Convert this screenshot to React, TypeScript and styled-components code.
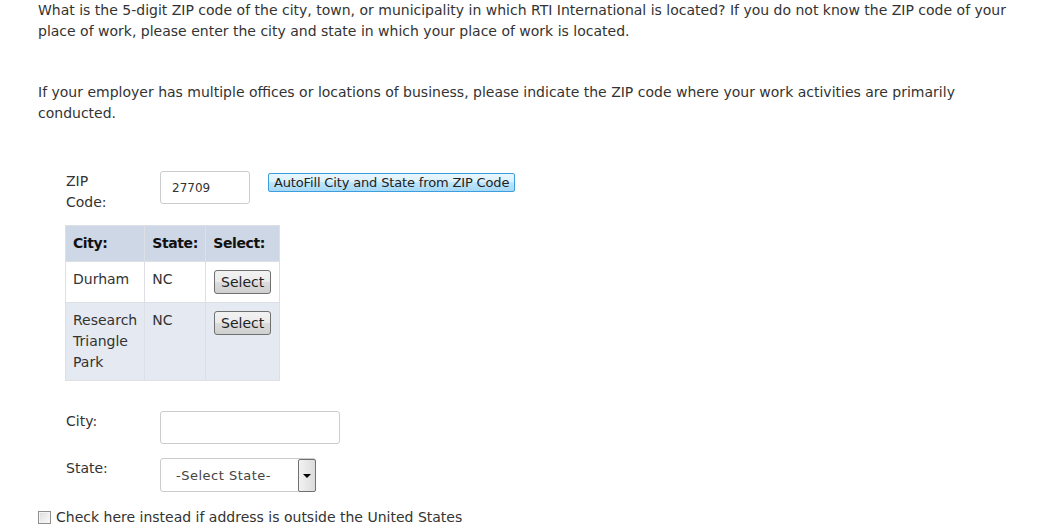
import styled, { createGlobalStyle } from "styled-components";

const GlobalStyle = createGlobalStyle`
  html, body {
    margin: 0;
    padding: 0;
    background: #fff;
  }
  body {
    font-family: "DejaVu Sans", Verdana, sans-serif;
    font-size: 14px;
    line-height: 21px;
    color: #333;
  }
`;

const Page = styled.div`
  padding: 0 12px 0 38px;
`;

const Question = styled.p`
  margin: 0 0 40px;
`;

const Note = styled.p`
  margin: 0 0 47px;
`;

const Fields = styled.div`
  padding-left: 28px;
`;

const FieldRow = styled.div<{ $gap?: number }>`
  display: flex;
  align-items: flex-start;
  margin-bottom: ${(p) => p.$gap ?? 14}px;
`;

const Label = styled.label`
  width: 60px;
  margin-right: 34px;
`;

const TextInput = styled.input<{ $width: number }>`
  box-sizing: border-box;
  width: ${(p) => p.$width}px;
  height: 33px;
  margin: 0;
  padding: 0 11px;
  border: 1px solid #ccc;
  border-radius: 3px;
  font-family: "DejaVu Sans", Verdana, sans-serif;
  font-size: 12px;
  color: #333;
  outline: none;
`;

const AutoFillButton = styled.button`
  height: 19px;
  margin: 2px 0 0 18px;
  padding: 0 5px;
  border: 1px solid #3c9ee0;
  border-radius: 2px;
  background: linear-gradient(#eaf6fd, #d9f0fc 50%, #bee6fd 50%, #a7d9f5);
  font-family: "DejaVu Sans", Verdana, sans-serif;
  font-size: 13px;
  letter-spacing: -0.15px;
  line-height: 15px;
  color: #222;
`;

const ResultTable = styled.table`
  border-collapse: collapse;
  margin: 12px 0 30px -1px;
  td,
  th {
    border: 1px solid #dcdfe4;
    padding: 7px;
    vertical-align: top;
    text-align: left;
  }
  th {
    background: #cdd7e6;
    font-weight: bold;
    letter-spacing: -0.4px;
    color: #111;
  }
`;

const ResultRow = styled.tr<{ $alt?: boolean }>`
  background: ${(p) => (p.$alt ? "#e5e9f1" : "#fff")};
`;

const SelectButton = styled.button`
  display: block;
  box-sizing: border-box;
  width: 57px;
  height: 24px;
  margin: 1px 0 1px 1px;
  padding: 0;
  border: 1px solid #707070;
  border-radius: 3px;
  background: linear-gradient(#f2f2f2, #ebebeb 50%, #dddddd 50%, #cfcfcf);
  font-family: "DejaVu Sans", Verdana, sans-serif;
  font-size: 14px;
  color: #222;
`;

const SelectWrap = styled.div`
  position: relative;
  width: 156px;
  height: 34px;
`;

const StateSelect = styled.select`
  box-sizing: border-box;
  width: 100%;
  height: 100%;
  margin: 0;
  padding: 0 0 0 15px;
  border: 1px solid #ccc;
  border-radius: 3px;
  background: #fff;
  appearance: none;
  font-family: "DejaVu Sans", Verdana, sans-serif;
  font-size: 13px;
  letter-spacing: 0.5px;
  color: #444;
  outline: none;
`;

const ArrowBox = styled.span`
  position: absolute;
  top: 1px;
  right: 0;
  box-sizing: border-box;
  width: 18px;
  height: 33px;
  border: 1px solid #707070;
  border-radius: 2px;
  background: linear-gradient(90deg, #f2f2f2, #dcdcdc);
  display: flex;
  align-items: center;
  justify-content: center;
  pointer-events: none;

  &::after {
    content: "";
    border-left: 4px solid transparent;
    border-right: 4px solid transparent;
    border-top: 4px solid #000;
  }
`;

const CheckLine = styled.label`
  display: flex;
  align-items: center;
  gap: 5px;
`;

const CheckBox = styled.input`
  appearance: none;
  box-sizing: border-box;
  width: 13px;
  height: 13px;
  margin: 0;
  border: 1px solid #8f8f8f;
  background: linear-gradient(135deg, #dcdcdc, #fbfbfb);
  box-shadow: inset 0 0 0 1px #f4f4f4;
`;

const rows = [
  { city: ["Durham"], state: "NC" },
  { city: ["Research", "Triangle", "Park"], state: "NC" },
];

export default function App() {
  return (
    <Page>
      <GlobalStyle />
      <Question>
        What is the 5-digit ZIP code of the city, town, or municipality in
        which RTI International is located? If you do not know the ZIP code of
        your place of work, please enter the city and state in which your place
        of work is located.
      </Question>
      <Note>
        If your employer has multiple offices or locations of business, please
        indicate the ZIP code where your work activities are primarily
        conducted.
      </Note>
      <Fields>
        <FieldRow $gap={0}>
          <Label>ZIP Code:</Label>
          <TextInput $width={90} defaultValue="27709" />
          <AutoFillButton type="button">
            AutoFill City and State from ZIP Code
          </AutoFillButton>
        </FieldRow>
        <ResultTable>
          <thead>
            <tr>
              <th style={{ width: 64 }}>City:</th>
              <th style={{ width: 46 }}>State:</th>
              <th style={{ width: 59 }}>Select:</th>
            </tr>
          </thead>
          <tbody>
            {rows.map((r, i) => (
              <ResultRow $alt={i % 2 === 1} key={r.city.join(" ")}>
                <td>
                  {r.city.map((w) => (
                    <div key={w}>{w}</div>
                  ))}
                </td>
                <td>{r.state}</td>
                <td>
                  <SelectButton type="button">Select</SelectButton>
                </td>
              </ResultRow>
            ))}
          </tbody>
        </ResultTable>
        <FieldRow>
          <Label>City:</Label>
          <TextInput $width={180} />
        </FieldRow>
        <FieldRow $gap={15}>
          <Label>State:</Label>
          <SelectWrap>
            <StateSelect defaultValue="">
              <option value="">-Select State-</option>
            </StateSelect>
            <ArrowBox />
          </SelectWrap>
        </FieldRow>
      </Fields>
      <CheckLine>
        <CheckBox type="checkbox" />
        Check here instead if address is outside the United States
      </CheckLine>
    </Page>
  );
}
